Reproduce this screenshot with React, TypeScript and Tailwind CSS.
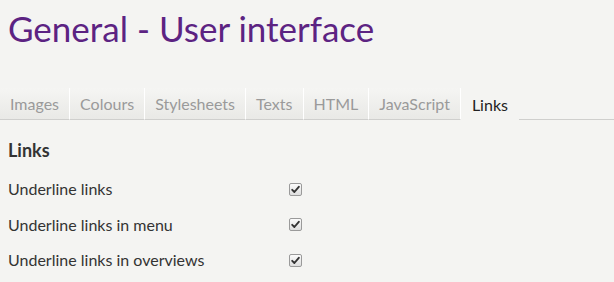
import React from "react";

const tabs = ["Images", "Colours", "Stylesheets", "Texts", "HTML", "JavaScript"];
const rows = ["Underline links", "Underline links in menu", "Underline links in overviews"];

function Check() {
  return (
    <span className="flex h-[13px] w-[13px] items-center justify-center rounded-[2px] border border-[#9a9a9a] bg-gradient-to-b from-[#fbfbfb] to-[#dedede]">
      <svg width="9" height="9" viewBox="0 0 9 9">
        <path d="M1.2 4.8 L3.4 7 L7.8 1.8" fill="none" stroke="#333" strokeWidth="1.9" strokeLinecap="round" strokeLinejoin="round" />
      </svg>
    </span>
  );
}

export default function App() {
  return (
    <div className="min-h-[282px] w-[614px] bg-[#f4f4f2] font-['Lato',sans-serif] overflow-hidden">
      <h1 className="pl-[8px] pt-[6px] text-[35px] leading-[44px] text-[#5c2382]">General - User interface</h1>
      <div className="mt-[38px] flex h-[32px] items-end">
        {tabs.map((t) => (
          <div
            key={t}
            className="flex h-[32px] items-center border-r border-r-[#ffffff] border-b border-b-[#cfcfcd] bg-gradient-to-b from-[#f5f5f3] to-[#e9e9e6] px-[10px] pt-[1px] text-[16px] text-[#9a9a9a]"
          >
            {t}
          </div>
        ))}
        <div className="flex h-[32px] items-center px-[11px] pt-[1px] text-[16px] text-[#222]">Links</div>
        <div className="h-[32px] flex-1 border-b border-b-[#cfcfcd]" />
      </div>
      <div className="px-[8px] pt-[18px]">
        <h2 className="text-[18px] font-bold leading-[24px] text-[#333]">Links</h2>
        <div className="mt-[16px] flex flex-col gap-[13.5px]">
          {rows.map((r) => (
            <div key={r} className="flex h-[22px] items-center text-[16px] text-[#333]">
              <span className="w-[281px]">{r}</span>
              <Check />
            </div>
          ))}
        </div>
      </div>
    </div>
  );
}
